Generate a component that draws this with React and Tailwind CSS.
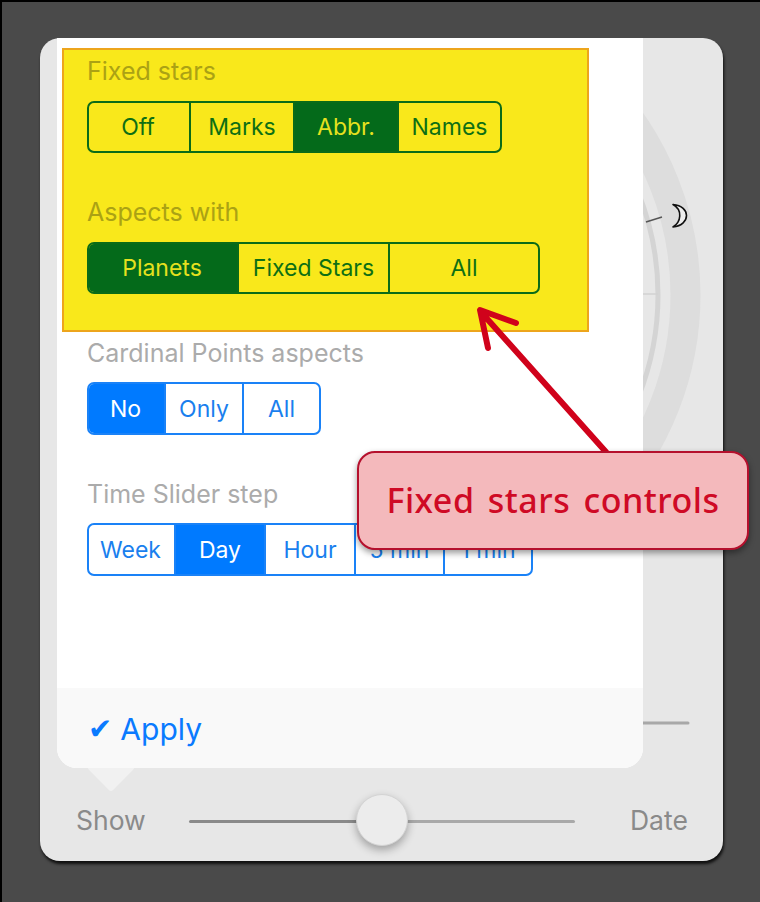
const Segmented = ({ items, selected, height = 'h-[52px]', green }) => {
  const line = green ? 'border-[#0b6b18]' : 'border-[#1a82f7]';
  return (
    <div className={`flex ${height} rounded-[7px] border-2 overflow-hidden ${line}`}>
      {items.map((item, i) => (
        <div
          key={item.label}
          style={{ width: item.width }}
          className={`flex items-center justify-center text-[23px] ${green ? '' : 'pt-[2px]'} ${i > 0 ? `border-l-2 ${line}` : '-ml-[2px]'} ${
            i === selected
              ? green
                ? 'bg-[#046a1a] text-[#e6e11f]'
                : 'bg-[#007aff] text-white'
              : green
                ? 'text-[#0e6f14]'
                : 'text-[#1a7fee]'
          }`}
        >
          {item.label}
        </div>
      ))}
    </div>
  );
};

const Label = ({ children, green }) => (
  <div className={`h-[30px] mb-[15px] text-[25px] ${green ? 'leading-[30px] text-[#aba214]' : 'leading-[33px] text-[#ababab]'}`}>
    {children}
  </div>
);

const Chart = () => (
  <svg className="absolute inset-0" width="683" height="823" viewBox="40 38 683 823" fill="none">
    <circle cx="383" cy="295" r="302.5" stroke="#dddddd" strokeWidth="30" />
    <circle cx="383" cy="295" r="275" stroke="#d4d4d4" strokeWidth="5" />
    <path d="M640 294H658" stroke="#d2d2d2" strokeWidth="1.5" />
    <path d="M646 222L662 217" stroke="#555" strokeWidth="1.5" />
    <path d="M673 204.5C691 206 691 225 673 227C681 222 683 210 673 204.5Z" fill="#eeeeee" stroke="#111" strokeWidth="1.6" strokeLinejoin="round" />
    <path d="M640 723H688" stroke="#a8a8a8" strokeWidth="3" strokeLinecap="round" />
  </svg>
);

const Slider = () => (
  <div className="relative w-[386px] h-[3px] flex">
    <div className="w-[193px] bg-[#8a8a8a] rounded-l-full" />
    <div className="flex-1 bg-[#a9a9a9] rounded-r-full" />
    <div className="absolute left-[167px] -top-[26px] w-[52px] h-[52px] rounded-full bg-[#ececec] border border-[#d4d4d4] shadow-[0_4px_8px_rgba(0,0,0,0.3)]" />
  </div>
);

const Annotation = () => (
  <>
    <svg className="absolute -left-[2px] -top-[2px] pointer-events-none" width="760" height="902" fill="none">
      <path d="M606 452L481 312M516 323L480 310L488 348" stroke="#d0021b" strokeWidth="6" strokeLinecap="round" strokeLinejoin="round" />
    </svg>
    <div className="absolute left-[355px] top-[449px] w-[392px] h-[99px] rounded-[18px] border-2 border-[#b5102d] bg-[#f4b9bc] shadow-[0_3px_6px_rgba(0,0,0,0.4)] flex items-center justify-center text-[34px] font-medium tracking-[0.5px] [word-spacing:4px] text-[#cf0a25] font-['Noto_Sans',sans-serif]">
      Fixed stars controls
    </div>
  </>
);

export default function App() {
  return (
    <div className="relative w-[760px] h-[902px] overflow-hidden bg-[#4a4a4a] border-t-2 border-l-2 border-black box-border pt-[36px] pl-[38px] font-['Inter',sans-serif]">
      <div className="relative w-[683px] h-[823px] rounded-[20px] bg-[#e7e7e7] shadow-[1px_3px_3px_rgba(0,0,0,0.8)]">
        <div className="absolute inset-0 rounded-[20px] overflow-hidden">
          <Chart />
        </div>

        <div className="relative flex flex-col h-full">
          <div className="relative ml-[17px] w-[586px] h-[730px] flex flex-col bg-white rounded-b-[20px]">
            <div className="ml-[5px] mt-[10px] mb-[5px] w-[527px] h-[284px] border-2 border-[#eda51c] bg-[#f9e81b] pl-[23px] pt-[6px]">
              <Label green>Fixed stars</Label>
              <div className="w-[415px]">
                <Segmented
                  green
                  selected={2}
                  items={[
                    { label: 'Off', width: 102 },
                    { label: 'Marks', width: 104 },
                    { label: 'Abbr.', width: 104 },
                    { label: 'Names', width: 103 },
                  ]}
                />
              </div>
              <div className="h-[44px]" />
              <Label green>Aspects with</Label>
              <div className="w-[453px]">
                <Segmented
                  green
                  selected={0}
                  items={[
                    { label: 'Planets', width: 150 },
                    { label: 'Fixed Stars', width: 151 },
                    { label: 'All', width: 150 },
                  ]}
                />
              </div>
            </div>

            <div className="pl-[30px]">
              <Label>Cardinal Points aspects</Label>
              <div className="w-[234px]">
                <Segmented
                  height="h-[53px]"
                  selected={0}
                  items={[
                    { label: 'No', width: 77 },
                    { label: 'Only', width: 78 },
                    { label: 'All', width: 77 },
                  ]}
                />
              </div>
              <div className="h-[43px]" />
              <Label>Time Slider step</Label>
              <div className="w-[446px]">
                <Segmented
                  height="h-[53px]"
                  selected={1}
                  items={[
                    { label: 'Week', width: 87 },
                    { label: 'Day', width: 90 },
                    { label: 'Hour', width: 90 },
                    { label: '5 min', width: 89 },
                    { label: '1 min', width: 88 },
                  ]}
                />
              </div>
            </div>

            <div className="flex-1" />

            <div className="h-[80px] shrink-0 rounded-b-[20px] bg-[#f9f9f9] flex items-center pl-[31px] pt-[2px] text-[30px] text-[#0a7aff]">
              <span className="font-['DejaVu_Sans',sans-serif] text-[29px] leading-none mr-[8px]">✔</span>
              <span>Apply</span>
            </div>

            <div className="absolute left-[29px] top-[730px] w-[50px] h-[25px] overflow-hidden">
              <div className="w-[34px] h-[34px] mx-auto -mt-[17px] rotate-45 rounded-[3px] bg-[#f1f1f1]" />
            </div>
          </div>

          <div className="flex-1 flex items-center pt-[13px] pl-[36px] text-[26.5px] text-[#8a8a8a]">
            <span className="w-[113px]">Show</span>
            <Slider />
            <span className="ml-[55px]">Date</span>
          </div>
        </div>
      </div>

      <Annotation />
    </div>
  );
}
